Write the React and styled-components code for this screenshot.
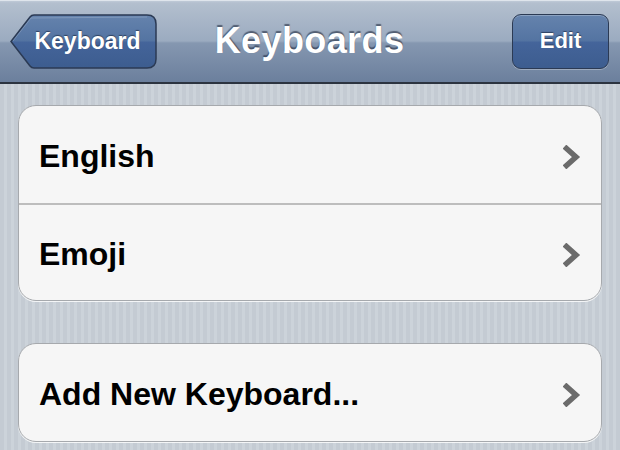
import React from "react";
import styled, { createGlobalStyle } from "styled-components";

const GlobalStyle = createGlobalStyle`
  html, body {
    margin: 0;
    padding: 0;
  }
  body {
    width: 620px;
    height: 450px;
    overflow: hidden;
    font-family: "Liberation Sans", Arial, sans-serif;
    background: repeating-linear-gradient(
      90deg,
      #c4cbd3 0px,
      #c4cbd3 4px,
      #ccd3da 4px,
      #ccd3da 7px
    );
  }
`;

const Screen = styled.div`
  width: 620px;
  height: 450px;
  display: flex;
  flex-direction: column;
`;

const NavBar = styled.div`
  height: 84px;
  box-sizing: border-box;
  display: grid;
  grid-template-columns: 1fr auto 1fr;
  align-items: center;
  padding: 0 11px 0 10px;
  background: linear-gradient(
    #c6d0dc 0px,
    #b3bfce 3px,
    #9babc0 41px,
    #8597b0 43px,
    #6a7e9c 84px
  );
  border-bottom: 2px solid #2c3440;
  box-shadow: inset 0 1px 0 #dfe5ec;
`;

const Title = styled.h1`
  margin: 0;
  font-size: 36px;
  font-weight: bold;
  letter-spacing: 0.4px;
  color: #fff;
  text-shadow: 0 -2px 1px rgba(30, 40, 60, 0.6);
  padding-bottom: 1px;
`;

const BarButton = styled.button`
  position: relative;
  height: 55px;
  box-sizing: border-box;
  border: none;
  background: none;
  padding: 0;
  font-family: inherit;
  font-size: 22px;
  font-weight: bold;
  color: #fff;
  text-shadow: 0 -1px 1px rgba(20, 30, 50, 0.6);
  display: flex;
  align-items: center;
  justify-content: center;
`;

const BackButton = styled(BarButton)`
  width: 147px;
  padding-left: 8px;
  font-size: 23px;
  justify-self: start;
`;

const EditButton = styled(BarButton)`
  width: 97px;
  justify-self: end;
  border: 1px solid #2b3a54;
  border-radius: 9px;
  background: linear-gradient(
    #6583ad 0%,
    #5474a2 48%,
    #44649a 52%,
    #3d5d8f 100%
  );
  box-shadow: 0 1px 0 rgba(255, 255, 255, 0.3),
    inset 0 1px 0 rgba(255, 255, 255, 0.25);
`;

const ButtonShape = styled.svg`
  position: absolute;
  inset: 0;
`;

const Label = styled.span`
  position: relative;
`;

const Content = styled.div`
  display: flex;
  flex-direction: column;
  gap: 42px;
  padding: 21px 18px 0 18px;
`;

const Group = styled.div`
  background: #f6f6f6;
  border: 1px solid #a6a9ad;
  border-radius: 18px;
  box-shadow: 0 1px 0 rgba(255, 255, 255, 0.8);
  overflow: hidden;
`;

const Row = styled.div`
  height: 97px;
  box-sizing: border-box;
  display: flex;
  align-items: center;
  justify-content: space-between;
  padding: 4px 20px 0 20px;
  font-size: 32px;
  font-weight: bold;
  color: #000;
  & + & {
    border-top: 2px solid #bdbdbd;
  }
`;

function Chevron() {
  return (
    <svg width="18" height="24" viewBox="0 0 18 24">
      <polyline
        points="3.5,3.5 13,12 3.5,20.5"
        fill="none"
        stroke="#6b6b6b"
        strokeWidth="5.5"
        strokeLinejoin="miter"
        strokeLinecap="square"
      />
    </svg>
  );
}

function BackShape() {
  return (
    <ButtonShape width="147" height="55" viewBox="0 0 147 55">
      <defs>
        <linearGradient id="backFill" x1="0" y1="0" x2="0" y2="1">
          <stop offset="0" stopColor="#6583ad" />
          <stop offset="0.48" stopColor="#5474a2" />
          <stop offset="0.52" stopColor="#44649a" />
          <stop offset="1" stopColor="#3d5d8f" />
        </linearGradient>
      </defs>
      <path
        d="M1 27.5 L20 3 Q21.5 1 24 1 L137 1 Q146 1 146 10 L146 45 Q146 54 137 54 L24 54 Q21.5 54 20 52 Z"
        fill="url(#backFill)"
        stroke="#2b3a54"
        strokeWidth="1.5"
      />
      <path
        d="M3 27 L21 4 L137 3"
        fill="none"
        stroke="rgba(255,255,255,0.18)"
        strokeWidth="1"
      />
    </ButtonShape>
  );
}

const rows = [["English", "Emoji"], ["Add New Keyboard..."]];

export default function App() {
  return (
    <Screen>
      <GlobalStyle />
      <NavBar>
        <BackButton>
          <BackShape />
          <Label>Keyboard</Label>
        </BackButton>
        <Title>Keyboards</Title>
        <EditButton>Edit</EditButton>
      </NavBar>
      <Content>
        {rows.map((group, i) => (
          <Group key={i}>
            {group.map((name) => (
              <Row key={name}>
                {name}
                <Chevron />
              </Row>
            ))}
          </Group>
        ))}
      </Content>
    </Screen>
  );
}
